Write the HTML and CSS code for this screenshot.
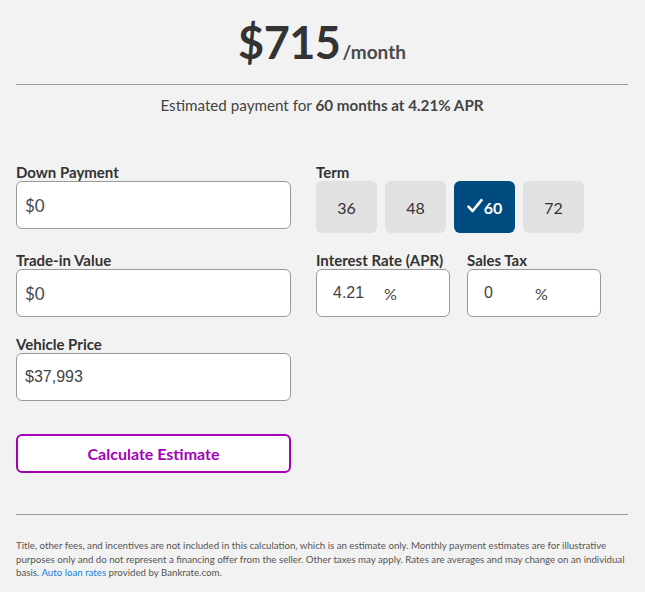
FILE: index.html
```html
<!DOCTYPE html>
<html lang="en">
<head>
<meta charset="utf-8">
<title>Payment Estimate</title>
<link rel="stylesheet" href="styles.css">
</head>
<body>
<div class="page">
  <header class="header">
    <div class="amount"><span class="price">$715</span><span class="per">/month</span></div>
  </header>
  <p class="summary">Estimated payment for <strong>60 months at 4.21% APR</strong></p>

  <form class="form">
    <div class="field">
      <label class="label">Down Payment</label>
      <div class="input"><span class="val sans">$0</span></div>
    </div>
    <div class="field">
      <label class="label">Term</label>
      <div class="terms">
        <button type="button" class="term">36</button>
        <button type="button" class="term">48</button>
        <button type="button" class="term active"><svg class="check" viewBox="0 0 16 16" width="16" height="16"><path d="M1.5 8.6 L5.6 13 L14.5 2.2" fill="none" stroke="#fff" stroke-width="2.6" stroke-linecap="round" stroke-linejoin="round"/></svg>60</button>
        <button type="button" class="term">72</button>
      </div>
    </div>

    <div class="field">
      <label class="label">Trade-in Value</label>
      <div class="input"><span class="val sans">$0</span></div>
    </div>
    <div class="pair">
      <div class="field small">
        <label class="label">Interest Rate (APR)</label>
        <div class="input pct"><span class="num">4.21</span><span class="unit">%</span></div>
      </div>
      <div class="field small">
        <label class="label">Sales Tax</label>
        <div class="input pct"><span class="num">0</span><span class="unit">%</span></div>
      </div>
    </div>

    <div class="field">
      <label class="label">Vehicle Price</label>
      <div class="input"><span class="val">$37,993</span></div>
    </div>
    <div></div>

    <button type="button" class="calc">Calculate Estimate</button>
  </form>

  <footer class="footer">
    <p class="disclaimer">Title, other fees, and incentives are not included in this calculation, which is an estimate only. Monthly payment estimates are for illustrative purposes only and do not represent a financing offer from the seller. Other taxes may apply. Rates are averages and may change on an individual basis. <a href="#" class="link">Auto loan rates</a> provided by Bankrate.com.</p>
  </footer>
</div>
</body>
</html>
```

FILE: styles.css
```css
* { box-sizing: border-box; }
html, body { margin: 0; padding: 0; background: #f2f2f2; }
body {
  font-family: Lato, "Open Sans", sans-serif;
  color: #333;
  width: 645px;
  height: 592px;
  overflow: hidden;
}
.page { padding: 0 17px 0 16px; }

.header {
  border-bottom: 1px solid #9a9a9a;
  height: 85px;
  padding-top: 14px;
  text-align: center;
}
.amount { line-height: 56px; }
.price {
  font-size: 45px;
  font-weight: 700;
  color: #333;
  letter-spacing: -0.5px;
}
.per {
  font-size: 19px;
  font-weight: 700;
  color: #4a4a4a;
  margin-left: 2px;
}

.summary {
  margin: 10px 0 0;
  text-align: center;
  font-size: 15.2px;
  line-height: 20px;
  color: #444;
}
.summary strong { font-weight: 700; color: #444; }

.form {
  display: grid;
  grid-template-columns: 275px 1fr;
  column-gap: 25px;
  row-gap: 18px;
  margin-top: 48px;
}
.field { display: flex; flex-direction: column; }
.label {
  font-size: 15px;
  font-weight: 700;
  line-height: 18px;
  color: #333;
}
.input {
  height: 48px;
  background: #fff;
  border: 1px solid #999;
  border-radius: 6px;
  display: flex;
  align-items: center;
  padding-left: 8px;
  font-family: "Liberation Sans", Arial, sans-serif;
  font-size: 16px;
  color: #444;
}
.val.sans { font-family: Lato, sans-serif; font-size: 17px; color: #4a4a4a; }

.terms { display: flex; gap: 8px; }
.term {
  width: 61px;
  height: 52px;
  border: 0;
  border-radius: 6px;
  background: #e1e1e1;
  color: #333;
  font-family: Lato, sans-serif;
  font-size: 16px;
  display: flex;
  align-items: center;
  justify-content: center;
  padding: 0;
}
.term.active {
  background: #004c80;
  color: #fff;
  font-weight: 700;
}
.check { margin-right: 1px; margin-top: -2px; }

.pair { display: flex; gap: 17px; }
.field.small { width: 134px; }
.pct { padding-left: 16px; }
.num { width: 51px; }
.unit { font-family: Lato, sans-serif; font-size: 16px; color: #444; }

.calc {
  grid-column: 1;
  margin-top: 15px;
  height: 39px;
  background: #fff;
  border: 2px solid #a300b8;
  border-radius: 6px;
  color: #a300b8;
  font-family: Lato, sans-serif;
  font-size: 16px;
  font-weight: 700;
  padding: 0;
}

.footer {
  margin-top: 41px;
  border-top: 1px solid #9a9a9a;
  padding-top: 24px;
}
.disclaimer {
  margin: 0;
  font-size: 9.7px;
  line-height: 13.5px;
  color: #555;
}
.link { color: #1680d8; text-decoration: none; }
```
